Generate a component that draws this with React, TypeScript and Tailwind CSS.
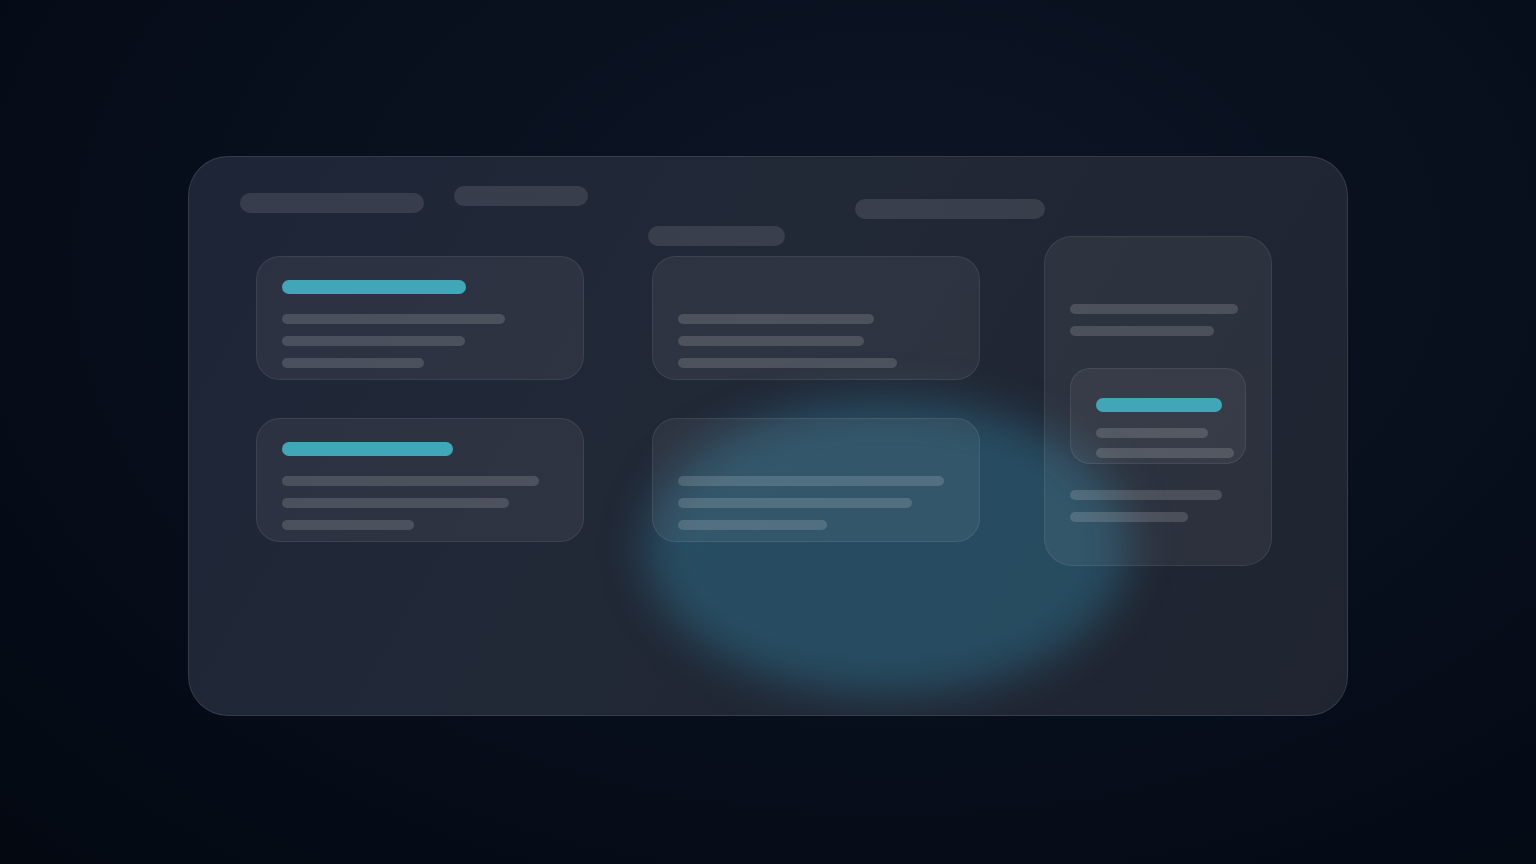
import React from 'react';

// skeleton bar
const Bar = ({ w, tone = 'gray' }: { w: number; tone?: 'gray' | 'cyan' | 'none' }) => {
    if (tone === 'cyan') return <div className="h-[14px] rounded-full bg-[#42a6b9]" style={{ width: w }} />;
    if (tone === 'none') return <div className="h-[14px]" style={{ width: w }} />;
    return <div className="h-[10px] rounded-full bg-white/[0.15]" style={{ width: w }} />;
};

interface CardProps {
    head?: number;
    lines: number[];
}

const Card = ({ head, lines }: CardProps) => (
    <div className="relative h-[124px] w-[328px] rounded-[24px] border border-white/[0.08] bg-white/[0.06] pl-[25px] pt-[23px]">
        <Bar w={head ?? 180} tone={head ? 'cyan' : 'none'} />
        <div className="mt-[20px] flex flex-col gap-[12px]">
            {lines.map((w, i) => (
                <Bar key={i} w={w} />
            ))}
        </div>
    </div>
);

const SideCard = () => (
    <div className="relative h-[330px] w-[228px] rounded-[28px] border border-white/[0.08] bg-white/[0.06] pl-[25px] pt-[67px]">
        <div className="flex flex-col gap-[12px]">
            <Bar w={168} />
            <Bar w={144} />
        </div>
        <div className="mt-[32px] h-[96px] w-[176px] rounded-[20px] border border-white/[0.08] bg-white/[0.05] pl-[25px] pt-[29px]">
            <Bar w={126} tone="cyan" />
            <div className="mt-[16px] flex flex-col gap-[10px]">
                <Bar w={112} />
                <Bar w={138} />
            </div>
        </div>
        <div className="mt-[26px] flex flex-col gap-[12px]">
            <Bar w={152} />
            <Bar w={118} />
        </div>
    </div>
);

const Pill = ({ w, mt }: { w: number; mt: string }) => (
    <div className={`h-[20px] shrink-0 rounded-full bg-white/[0.11] ${mt}`} style={{ width: w }} />
);

export default function App() {
    return (
        <div className="min-h-screen w-full overflow-hidden bg-[radial-gradient(ellipse_at_58%_30%,#0e1626_0%,#08101e_45%,#030811_100%)] pt-[156px]">
            <div className="relative mx-auto h-[560px] w-[1160px] overflow-hidden rounded-[40px] border border-white/[0.1] bg-[linear-gradient(120deg,#1e2537_0%,#212836_45%,#1f2430_100%)] pt-[29px]">
                {/* teal glow behind the cards */}
                <div className="pointer-events-none absolute left-[456px] top-[242px] h-[296px] w-[484px] rounded-[50%] bg-[rgba(52,150,185,0.34)] blur-[22px]" />

                <div className="relative flex h-[60px] items-start pl-[51px]">
                    <Pill w={184} mt="mt-[7px]" />
                    <div className="ml-[30px]"><Pill w={134} mt="mt-0" /></div>
                    <div className="ml-[60px]"><Pill w={137} mt="mt-[40px]" /></div>
                    <div className="ml-[70px]"><Pill w={190} mt="mt-[13px]" /></div>
                </div>

                <div className="relative flex items-start pl-[67px]">
                    <div className="mt-[10px] flex flex-col gap-[38px]">
                        <Card head={184} lines={[223, 183, 142]} />
                        <Card head={171} lines={[257, 227, 132]} />
                    </div>
                    <div className="ml-[68px] mt-[10px] flex flex-col gap-[38px]">
                        <Card lines={[196, 186, 219]} />
                        <Card lines={[266, 234, 149]} />
                    </div>
                    <div className="ml-[64px] -mt-[10px]">
                        <SideCard />
                    </div>
                </div>
            </div>
        </div>
    );
}
